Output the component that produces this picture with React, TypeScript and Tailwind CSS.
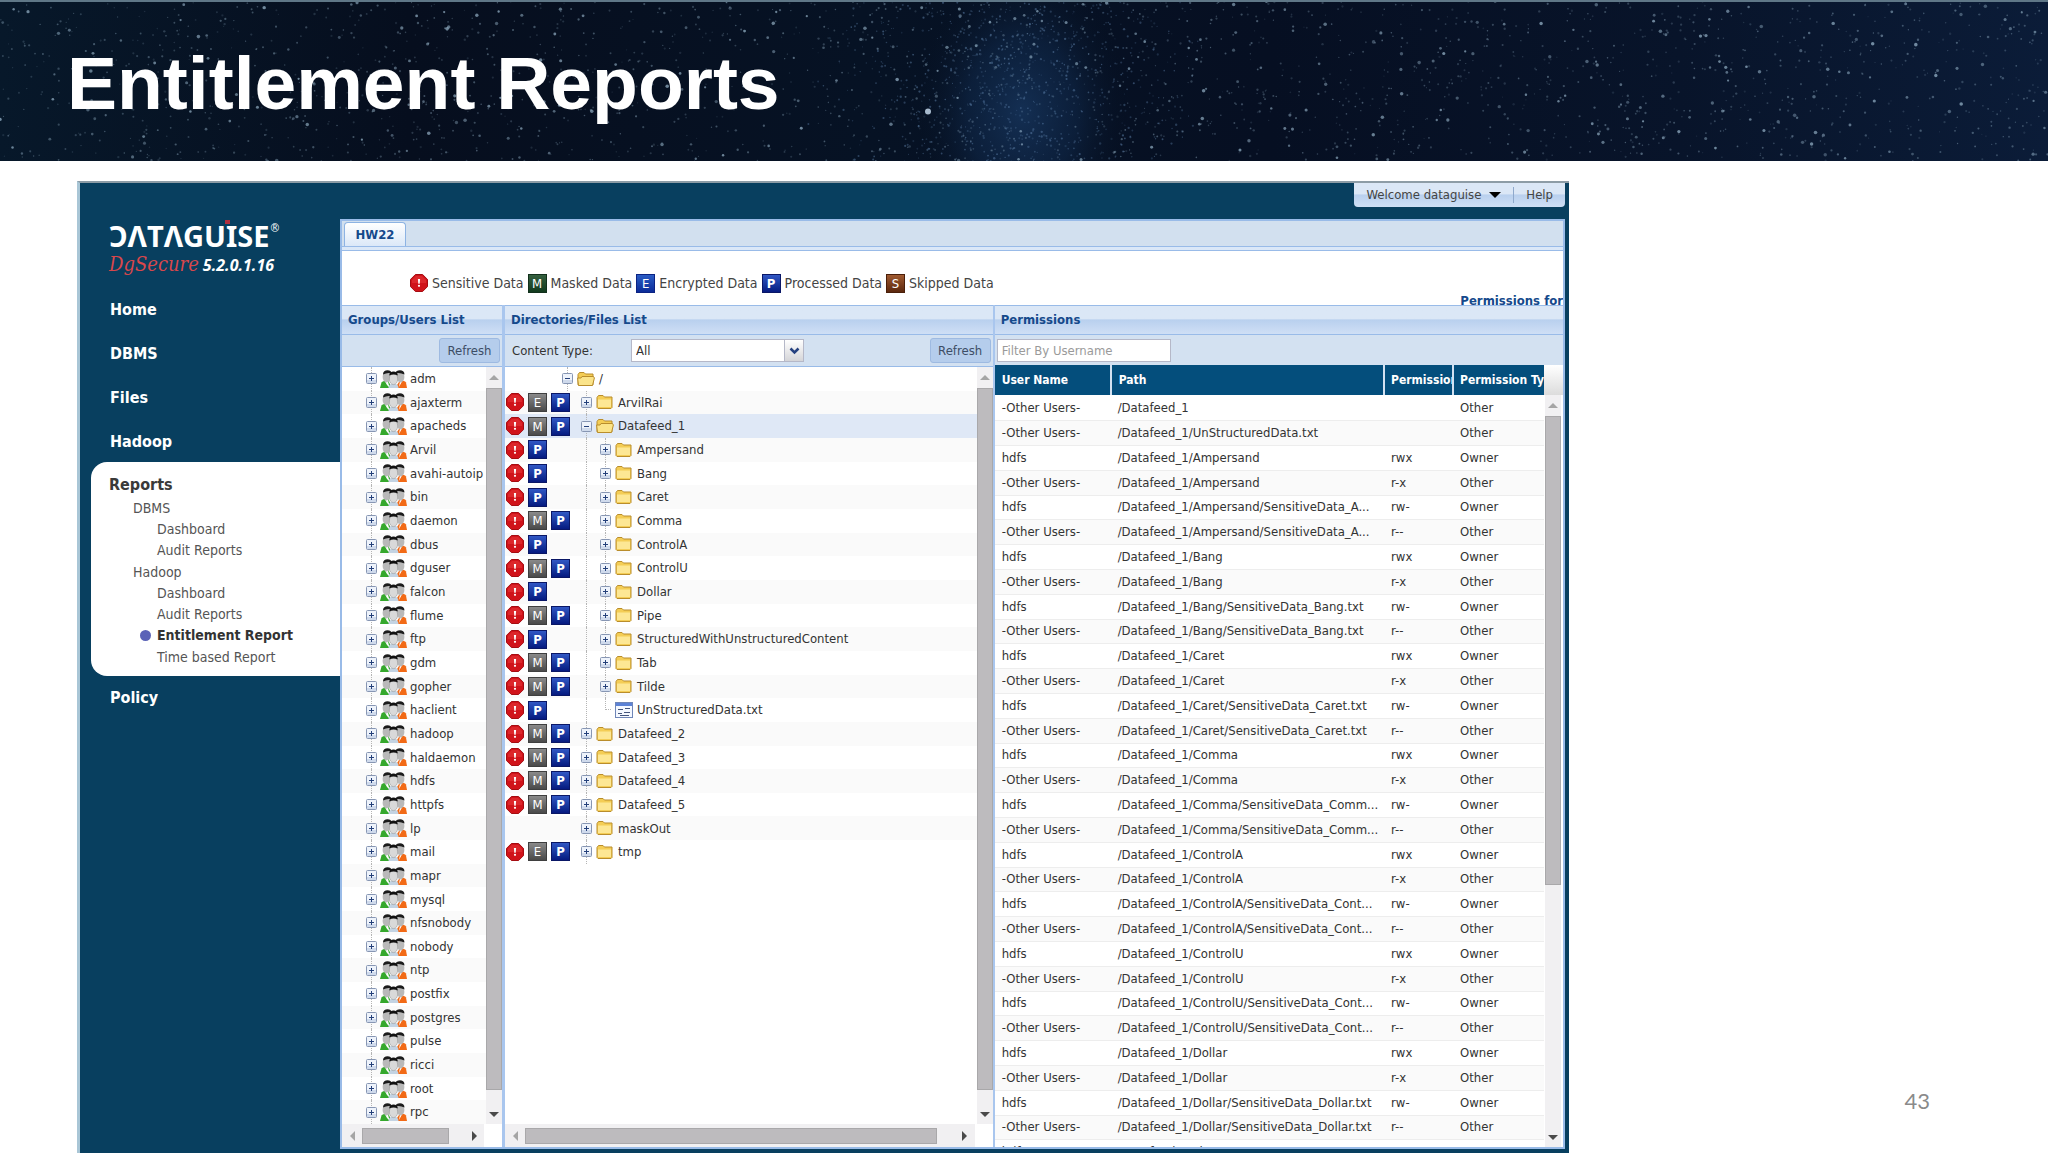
import clsx from "clsx";

const users = [
  "adm", "ajaxterm", "apacheds", "Arvil", "avahi-autoip", "bin", "daemon", "dbus",
  "dguser", "falcon", "flume", "ftp", "gdm", "gopher", "haclient", "hadoop",
  "haldaemon", "hdfs", "httpfs", "lp", "mail", "mapr", "mysql", "nfsnobody",
  "nobody", "ntp", "postfix", "postgres", "pulse", "ricci", "root", "rpc",
];

type Dir = { name: string; level: number; badges: string; open?: boolean; file?: boolean };

const dirs: Dir[] = [
  { name: "/", level: 0, badges: "", open: true },
  { name: "ArvilRai", level: 1, badges: "!EP" },
  { name: "Datafeed_1", level: 1, badges: "!MP", open: true },
  { name: "Ampersand", level: 2, badges: "!P" },
  { name: "Bang", level: 2, badges: "!P" },
  { name: "Caret", level: 2, badges: "!P" },
  { name: "Comma", level: 2, badges: "!MP" },
  { name: "ControlA", level: 2, badges: "!P" },
  { name: "ControlU", level: 2, badges: "!MP" },
  { name: "Dollar", level: 2, badges: "!P" },
  { name: "Pipe", level: 2, badges: "!MP" },
  { name: "StructuredWithUnstructuredContent", level: 2, badges: "!P" },
  { name: "Tab", level: 2, badges: "!MP" },
  { name: "Tilde", level: 2, badges: "!MP" },
  { name: "UnStructuredData.txt", level: 2, badges: "!P", file: true },
  { name: "Datafeed_2", level: 1, badges: "!MP" },
  { name: "Datafeed_3", level: 1, badges: "!MP" },
  { name: "Datafeed_4", level: 1, badges: "!MP" },
  { name: "Datafeed_5", level: 1, badges: "!MP" },
  { name: "maskOut", level: 1, badges: "" },
  { name: "tmp", level: 1, badges: "!EP" },
];

const permissions: string[][] = [
  ["-Other Users-", "/Datafeed_1", "", "Other"],
  ["-Other Users-", "/Datafeed_1/UnStructuredData.txt", "", "Other"],
];

// every feed folder has a row pair for itself and one for its sensitive file
[
  ["Ampersand", "SensitiveData_A..."],
  ["Bang", "SensitiveData_Bang.txt"],
  ["Caret", "SensitiveData_Caret.txt"],
  ["Comma", "SensitiveData_Comm..."],
  ["ControlA", "SensitiveData_Cont..."],
  ["ControlU", "SensitiveData_Cont..."],
  ["Dollar", "SensitiveData_Dollar.txt"],
].forEach(([dir, file]) => {
  permissions.push(["hdfs", `/Datafeed_1/${dir}`, "rwx", "Owner"]);
  permissions.push(["-Other Users-", `/Datafeed_1/${dir}`, "r-x", "Other"]);
  permissions.push(["hdfs", `/Datafeed_1/${dir}/${file}`, "rw-", "Owner"]);
  permissions.push(["-Other Users-", `/Datafeed_1/${dir}/${file}`, "r--", "Other"]);
});
permissions.push(["hdfs", "/Datafeed_1/Pipe", "rwx", "Owner"]);

let seed = 7;
const rand = () => {
  seed = (seed * 16807) % 2147483647;
  return seed / 2147483647;
};

const stars = Array.from({ length: 2400 }, () => {
  const big = rand() > 0.86;
  return {
    x: rand() * 2048,
    y: rand() * 160,
    r: big ? 1.1 + rand() * 0.7 : 0.6 + rand() * 0.6,
    o: big ? 0.35 + rand() * 0.35 : 0.12 + rand() * 0.3,
  };
});

// dense cluster around the nebula
const dust = Array.from({ length: 900 }, () => ({
  x: 1015 + (rand() + rand() + rand() - 1.5) * 150,
  y: rand() * 160,
  r: 0.5 + rand() * 0.7,
  o: 0.15 + rand() * 0.3,
}));

const StarField = () => (
  <svg
    className="absolute inset-0 h-full w-full"
    viewBox="0 0 2048 160"
    preserveAspectRatio="xMidYMid slice"
    aria-hidden="true"
  >
    <defs>
      <radialGradient id="nebula">
        <stop offset="0" stopColor="#1a3c68" stopOpacity="0.7" />
        <stop offset="0.5" stopColor="#112c50" stopOpacity="0.5" />
        <stop offset="1" stopColor="#06101f" stopOpacity="0" />
      </radialGradient>
      <linearGradient id="sky">
        <stop offset="0" stopColor="#07182a" />
        <stop offset="0.2" stopColor="#060e1e" />
        <stop offset="0.42" stopColor="#061224" />
        <stop offset="0.62" stopColor="#060f22" />
        <stop offset="0.82" stopColor="#08142a" />
        <stop offset="1" stopColor="#0b1c38" />
      </linearGradient>
    </defs>
    <rect width="2048" height="160" fill="url(#sky)" />
    <ellipse cx="1022" cy="110" rx="110" ry="150" fill="url(#nebula)" />
    {stars.map((s, i) => (
      <circle key={i} cx={s.x} cy={s.y} r={s.r} fill="#9fbdd2" opacity={s.o} />
    ))}
    {dust.map((s, i) => (
      <circle key={i} cx={s.x} cy={s.y} r={s.r} fill="#6f96c2" opacity={s.o} />
    ))}
    <circle cx="928" cy="110" r="3" fill="#b9cde0" opacity="0.9" />
  </svg>
);

const badgeColors: Record<string, string> = {
  E: "border-[#3f3f3f] from-[#8a8a8a] to-[#4a4a4a]",
  M: "border-[#3f3f3f] from-[#8a8a8a] to-[#4a4a4a]",
  P: "border-[#0a1766] from-[#3157c4] to-[#071a80]",
  maskedLegend: "border-[#12301c] from-[#35603f] to-[#123a1e]",
  encryptedLegend: "border-[#0b2383] from-[#2b5cc4] to-[#0c2b98]",
  S: "border-[#4a1f0a] from-[#a05a30] to-[#5c280e]",
};

const Badge = ({ letter, color }: { letter: string; color?: string }) => {
  if (letter === "!") {
    return (
      <svg className="size-[18px] shrink-0" viewBox="0 0 18 18" aria-hidden="true">
        <path d="M5.4.5h7.2l4.9 4.9v7.2l-4.9 4.9H5.4L.5 12.600V5.400Z" fill="#d0131a" stroke="#a50d12" />
        <path d="M5.8 2h6.400l3.800 4v3H2V6Z" fill="#e83c3c" opacity=".5" />
        <path d="M7.900 5h2.200l-.4 4.800H8.300Z" fill="#fff" />
        <circle cx="9" cy="11.800" r="1.100" fill="#fff" />
      </svg>
    );
  }
  return (
    <span
      className={clsx(
        "flex size-[19px] shrink-0 items-center justify-center border bg-linear-to-b text-[13px] leading-none text-white",
        letter === "P" && "font-bold",
        badgeColors[color ?? letter]
      )}
    >
      {letter}
    </span>
  );
};

// the toggle box sits on the dotted branch line of the tree
const Expander = ({ open, name }: { open?: boolean; name: string }) => (
  <span className="relative flex h-full w-[11px] shrink-0 items-center">
    <span className="absolute inset-y-0 left-[5px] border-l border-dotted border-[#b5b5b5]" />
    <button aria-label={`Toggle ${name}`} className="relative size-[11px] cursor-pointer">
      <svg viewBox="0 0 11 11" className="size-[11px]" aria-hidden="true">
        <rect x=".5" y=".5" width="10" height="10" rx="1" fill="#eef3fb" stroke="#8796b3" />
        <path d="M1 7h9v3H1Z" fill="#cfdaec" />
        <path d="M3 5.500h5" stroke="#24407a" />
        {!open && <path d="M5.500 3v5" stroke="#24407a" />}
      </svg>
    </button>
  </span>
);

const Folder = ({ open }: { open?: boolean }) => (
  <svg className="h-[16px] w-[18px] shrink-0" viewBox="0 0 18 16" aria-hidden="true">
    <path
      d="M1 13.500V3.500L2.500 1.500h4.500L8.500 3h7.500V13.500L15 14.500H2Z"
      fill="#f4cd55"
      stroke="#b98d2c"
    />
    {open ? (
      <path d="M1.500 14.500 .6 7H4l1-1.500h11.500L17.400 7 15.500 14.500Z" fill="#fbe48a" stroke="#b98d2c" />
    ) : (
      <path d="M2 5.500h13v7.500H2Z" fill="#fde794" />
    )}
  </svg>
);

const FileIcon = () => (
  <svg className="h-[16px] w-[18px] shrink-0" viewBox="0 0 18 16" aria-hidden="true">
    <rect x=".5" y=".5" width="17" height="15" fill="#f4f8ff" stroke="#6f86b8" />
    <path d="M1 1h16v3H1Z" fill="#5c82d6" />
    <path d="M3 7.500h5M10 6.500h5M3 11.500h4M9 10.500h6M5 13.500h9" stroke="#44557c" strokeWidth="1.200" />
  </svg>
);

const UsersIcon = () => (
  <svg className="h-[18px] w-[27px] shrink-0" viewBox="0 0 27 18" aria-hidden="true">
    <path d="M0 18 1.500 12.500C3 11 5 10.500 8 10.500L12 18Z" fill="#35a82c" />
    <path d="M27 18l-1-5.500c-1-1.500-3-2-6-2L15 18Z" fill="#f26a16" />
    <path d="M5 11.500h3l1.500 6L7 15ZM20 11.500h2L19 17Z" fill="#fff" />
    <path d="M8.500 18c0-3 2-4.500 5-4.500s5 1.500 5 4.500Z" fill="#c3d3e3" />
    <ellipse cx="6.500" cy="7" rx="3.900" ry="5.400" fill="#b9b9b9" />
    <ellipse cx="20.500" cy="7" rx="3.900" ry="5.400" fill="#b9b9b9" />
    <path d="M3 4.500C3 1.500 5 .3 7.500.3S11.500 1.500 11.500 3.500C8.500 2.200 6 3.200 3 4.500Z" fill="#1c1c1c" />
    <path d="M15.500 3.500c0-2 2-3.200 4.500-3.200s4.500 1.200 4.500 4.200c-3-1.300-6-2.300-9-1Z" fill="#1c1c1c" />
    <ellipse cx="13.500" cy="9" rx="4.200" ry="5.600" fill="#d9d9d9" stroke="#8d8d8d" strokeWidth=".5" />
    <path d="M9.200 5.500c0-2.800 2-3.900 4.300-3.900s4.300 1.100 4.300 3.900c-2.500-1.300-5.800-1.300-8.600 0Z" fill="#111" />
  </svg>
);

const VerticalBar = ({ thumb }: { thumb: string }) => (
  <div className="flex w-4 shrink-0 flex-col items-center bg-[#f1f0f2]" aria-hidden="true">
    <span className="flex h-[21px] items-center">
      <span className="border-x-[5px] border-b-[5px] border-x-transparent border-b-[#a5a5a5]" />
    </span>
    <div className="flex w-full min-h-0 flex-1 flex-col">
      <div className={clsx("w-full border border-[#a9a8aa] bg-[#bdbbbe]", thumb)} />
    </div>
    <span className="flex h-[20px] items-center">
      <span className="border-x-[5px] border-t-[5px] border-x-transparent border-t-[#4a4a4a]" />
    </span>
  </div>
);

const HorizontalBar = ({ thumb }: { thumb: string }) => (
  <div className="mr-[18px] flex h-[23px] shrink-0 items-center bg-[#f1f0f2]" aria-hidden="true">
    <span className="flex w-5 justify-center">
      <span className="border-y-[5px] border-r-[5px] border-y-transparent border-r-[#a5a5a5]" />
    </span>
    <div className="min-w-0 flex-1">
      <div className={clsx("h-4 border border-[#a9a8aa] bg-[#bdbbbe]", thumb)} />
    </div>
    <span className="flex w-5 justify-center">
      <span className="border-y-[5px] border-l-[5px] border-y-transparent border-l-[#4a4a4a]" />
    </span>
  </div>
);

const PanelTitle = ({ children }: { children: string }) => (
  <h2 className="h-[30px] shrink-0 border-y border-[#99bbe8] bg-linear-to-b from-[#dbe7f6] from-45% via-[#b9d0ee] via-50% to-[#cfdff5] px-[6px] text-[13px] leading-7 font-bold text-[#15498b]">
    {children}
  </h2>
);

const Refresh = () => (
  <button className="h-[25px] w-[61px] cursor-pointer rounded-[3px] border border-[#9ebae1] bg-[#b5cdec] text-[13px] text-[#3d4d66]">
    Refresh
  </button>
);

const Guide = () => (
  <span className="ml-[5px] h-full w-[14px] shrink-0 border-l border-dotted border-[#b5b5b5]" />
);

const Sidebar = () => {
  const link = "flex h-11 items-center pl-[30px] text-base font-bold text-white";
  const sub = "flex h-[21px] items-center text-sm text-[#555]";
  return (
    <aside className="w-[260px] shrink-0">
      <div className="flex h-[105px] flex-col pt-[37px] pl-[29px]">
        <div className="flex items-start text-white">
          <span className="relative font-['Noto_Sans'] text-[29px] leading-8 font-bold" aria-label="DATAGUISE">
            ƆΛTΛGUISE
            <span className="absolute top-0 right-[40px] h-1 w-[5px] bg-[#b03040]" />
          </span>
          <span className="text-xs leading-4">®</span>
        </div>
        <div className="flex items-baseline gap-1 leading-6">
          <span className="font-['DejaVu_Serif_Condensed'] text-xl leading-6 text-[#d8474b] italic">DgSecure</span>
          <span className="font-['Noto_Sans'] text-base leading-6 font-bold text-white italic">5.2.0.1.16</span>
        </div>
      </div>
      <nav>
        <a href="#home" className={link}>Home</a>
        <a href="#dbms" className={link}>DBMS</a>
        <a href="#files" className={link}>Files</a>
        <a href="#hadoop" className={link}>Hadoop</a>
        <div className="-mt-[2px] ml-[11px] h-[214px] rounded-l-2xl bg-white pt-[11px] pl-[18px]">
          <a href="#reports" className="flex h-6 items-center text-base font-bold text-[#3a3a3a]">Reports</a>
          <ul className="pl-6">
            <li><a href="#reports-dbms" className={sub}>DBMS</a></li>
            <li className="pl-6"><a href="#dbms-dashboard" className={sub}>Dashboard</a></li>
            <li className="pl-6"><a href="#dbms-audit" className={sub}>Audit Reports</a></li>
            <li><a href="#reports-hadoop" className={clsx(sub, "mt-px")}>Hadoop</a></li>
            <li className="pl-6"><a href="#hadoop-dashboard" className={sub}>Dashboard</a></li>
            <li className="pl-6"><a href="#hadoop-audit" className={sub}>Audit Reports</a></li>
            <li className="flex items-center pl-[7px]">
              <span className="mr-[6px] size-[11px] rounded-full bg-[#5b63b7]" />
              <a href="#entitlement" className="flex h-[22px] items-center text-sm font-bold text-[#333]">
                Entitlement Report
              </a>
            </li>
            <li className="pl-6"><a href="#time-based" className={sub}>Time based Report</a></li>
          </ul>
        </div>
        <a href="#policy" className={link}>Policy</a>
      </nav>
    </aside>
  );
};

const Legend = () => (
  <div className="relative flex h-[54px] shrink-0 items-center overflow-hidden bg-white pt-[10px] pl-[68px] text-sm text-[#444]">
    <ul className="flex items-center gap-1">
      <li className="flex items-center gap-1"><Badge letter="!" />Sensitive Data</li>
      <li className="flex items-center gap-1"><Badge letter="M" color="maskedLegend" />Masked Data</li>
      <li className="flex items-center gap-1"><Badge letter="E" color="encryptedLegend" />Encrypted Data</li>
      <li className="flex items-center gap-1"><Badge letter="P" />Processed Data</li>
      <li className="flex items-center gap-1"><Badge letter="S" />Skipped Data</li>
    </ul>
    <span className="absolute right-0 -bottom-[6px] text-[13px] leading-5 font-bold text-[#15498b]">Permissions for</span>
  </div>
);

const Groups = () => (
  <section className="flex min-h-0 w-[163px] shrink-0 flex-col border-r-3 border-[#a9c6ee]">
    <PanelTitle>Groups/Users List</PanelTitle>
    <div className="flex h-8 shrink-0 items-center justify-end border-b border-[#99bbe8] bg-[#d3e1f1] pr-[2px]">
      <Refresh />
    </div>
    <div className="flex min-h-0 flex-1">
      <ul className="grid min-w-0 flex-1 grid-rows-[repeat(32,minmax(0,1fr))] overflow-hidden">
        {users.map((u) => (
          <li key={u} className="flex items-center pl-[24px] text-[13px] whitespace-nowrap text-[#333] even:bg-[#fafafa]">
            <Expander name={u} />
            <span className="ml-[3px] flex"><UsersIcon /></span>
            <span className="ml-[3px]">{u}</span>
          </li>
        ))}
      </ul>
      <VerticalBar thumb="h-[98%]" />
    </div>
    <HorizontalBar thumb="w-[85%]" />
  </section>
);

const Directories = () => (
  <section className="flex min-h-0 min-w-0 flex-[489] flex-col border-r-2 border-[#a9c6ee]">
    <PanelTitle>Directories/Files List</PanelTitle>
    <div className="flex h-8 shrink-0 items-center border-b border-[#99bbe8] bg-[#d3e1f1] pr-[2px] pl-[7px] text-[13px] text-[#333]">
      <label htmlFor="content-type" className="w-[119px]">Content Type:</label>
      <span className="relative flex">
        <select
          id="content-type"
          className="h-[23px] w-[173px] appearance-none border border-[#b5b8c8] bg-white pl-1 text-[13px] text-[#333]"
        >
          <option>All</option>
        </select>
        <span className="pointer-events-none absolute top-px right-px flex h-[21px] w-[19px] items-center justify-center border-l border-[#b5b8c8] bg-linear-to-b from-white to-[#d5d5d8]">
          <svg width="11" height="8" viewBox="0 0 11 8" aria-hidden="true">
            <path d="M1.500 1.500l4 4 4-4" fill="none" stroke="#26417f" strokeWidth="2.500" />
          </svg>
        </span>
      </span>
      <span className="ml-auto"><Refresh /></span>
    </div>
    <div className="flex min-h-0 flex-1">
      <ul className="grid min-w-0 flex-1 grid-rows-[repeat(32,minmax(0,1fr))] overflow-hidden">
        {dirs.map((d) => (
          <li
            key={d.name}
            className={clsx(
              "flex items-center pl-px text-[13px] whitespace-nowrap text-[#333]",
              d.name === "Datafeed_1" ? "bg-[#dfe8f6]" : "even:bg-[#fafafa]"
            )}
          >
            <span className="flex w-14 shrink-0 items-center gap-1">
              {d.badges.split("").map((b) => <Badge key={b} letter={b} />)}
            </span>
            {d.level > 0 && <span className="w-[19px] shrink-0" />}
            {d.level > 1 && <Guide />}
            {d.file ? (
              <span className="flex h-full w-[11px] shrink-0 items-start pl-[5px]">
                <span className="h-1/2 w-[6px] border-b border-l border-dotted border-[#b5b5b5]" />
              </span>
            ) : (
              <Expander open={d.open} name={d.name} />
            )}
            <span className="mx-1 flex">{d.file ? <FileIcon /> : <Folder open={d.open} />}</span>
            {d.name}
          </li>
        ))}
      </ul>
      <VerticalBar thumb="h-[98%]" />
    </div>
    <HorizontalBar thumb="w-[96%]" />
  </section>
);

const Permissions = () => (
  <section className="flex min-h-0 min-w-0 flex-[570] flex-col">
    <PanelTitle>Permissions</PanelTitle>
    <div className="flex h-[30px] shrink-0 items-center bg-[#d3e1f1] pl-[2px]">
      <input
        aria-label="Filter By Username"
        placeholder="Filter By Username"
        className="h-[23px] w-[174px] border border-[#b5b8c8] bg-white px-1 text-[13px] placeholder:text-[#9a9a9a]"
      />
    </div>
    <div className="flex min-h-0 flex-1">
      <div className="min-w-0 flex-1 overflow-hidden">
        <table className="w-full table-fixed border-collapse text-left text-[13px] whitespace-nowrap text-[#333]">
          <thead>
            <tr className="h-[30px] bg-[#044e7c] text-xs text-white">
              <th className="w-[116px] overflow-hidden border-r-2 border-[#d3e1f1] pl-[7px] font-bold">User Name</th>
              <th className="overflow-hidden border-r-2 border-[#d3e1f1] pl-[7px] font-bold">Path</th>
              <th className="w-[69px] overflow-hidden border-r-2 border-[#d3e1f1] pl-[6px] font-bold">Permission</th>
              <th className="w-[91px] overflow-hidden pl-[6px] font-bold">Permission Type</th>
            </tr>
          </thead>
          <tbody>
            {permissions.map((row, i) => (
              <tr key={i} className="h-[25px] border-b border-[#ededed] even:bg-[#fafafa] nth-[5n]:h-6">
                <td className="overflow-hidden pl-[7px]">{row[0]}</td>
                <td className="overflow-hidden pl-[7px]">{row[1]}</td>
                <td className="overflow-hidden pl-[7px]">{row[2]}</td>
                <td className="overflow-hidden pl-[7px]">{row[3]}</td>
              </tr>
            ))}
          </tbody>
        </table>
      </div>
      <div className="flex w-[19px] shrink-0 flex-col">
        <div className="h-[30px] bg-linear-to-b from-white to-[#dcdcdc]" />
        <div className="flex min-h-0 flex-1 pl-px"><VerticalBar thumb="h-[66%]" /></div>
      </div>
    </div>
  </section>
);

const App = () => {
  return (
    <div className="flex h-screen flex-col overflow-hidden bg-white font-['DejaVu_Sans_Condensed','DejaVu_Sans',sans-serif]">
      <header className="relative flex h-[161px] shrink-0 items-center border-t-2 border-[#5f7787] bg-[#050c1c] pl-[67px]">
        <StarField />
        <h1 className="relative pt-1 font-['Liberation_Sans',sans-serif] text-[75px] leading-none font-bold text-white">
          Entitlement Reports
        </h1>
      </header>
      <main className="flex min-h-0 flex-1 pt-5 pl-[77px]">
        <div className="flex w-[75.7%] flex-col border-t-2 border-l-3 border-t-[#8d9ca6] border-l-[#a9c6d6] bg-[#083f5f] pb-1">
          <div className="flex min-h-0 flex-1">
            <Sidebar />
            <div className="flex min-w-0 flex-1 flex-col pr-1">
              <div className="flex h-[36px] shrink-0 justify-end">
                <div className="flex h-6 items-center rounded-b-sm bg-linear-to-b from-[#dbe7f6] from-45% via-[#b9d0ee] via-50% to-[#cfdff5] text-[13px] text-[#444]">
                  <button className="flex cursor-pointer items-center gap-2 px-[12px]">
                    Welcome dataguise
                    <span className="border-x-[6px] border-t-[6px] border-x-transparent border-t-black" />
                  </button>
                  <span className="h-4 w-px bg-[#8fa9cc]" />
                  <a href="#help" className="px-[12px]">Help</a>
                </div>
              </div>
              <div className="flex min-h-0 flex-1 flex-col border-2 border-[#99bbe8] bg-white">
                <div className="flex h-[30px] shrink-0 flex-col border-b border-[#99bbe8] bg-[#dbe8f8]">
                  <div className="flex h-[26px] items-end border-b border-[#99bbe8] bg-[#d2e0ef] pl-[2px]">
                    <button className="h-[24px] w-[62px] cursor-pointer rounded-t-sm border border-b-0 border-[#8db3e3] bg-linear-to-b from-white to-[#dbe8f8] text-[13px] font-bold text-[#15498b]">
                      HW22
                    </button>
                  </div>
                </div>
                <Legend />
                <div className="flex min-h-0 flex-1">
                  <Groups />
                  <Directories />
                  <Permissions />
                </div>
              </div>
            </div>
          </div>
        </div>
        <div className="flex flex-1 items-end justify-end pr-[118px] pb-[38px] font-['Lato',sans-serif] text-[22px] leading-7 text-[#8a8a8a]">
          43
        </div>
      </main>
    </div>
  );
};

export default App;
